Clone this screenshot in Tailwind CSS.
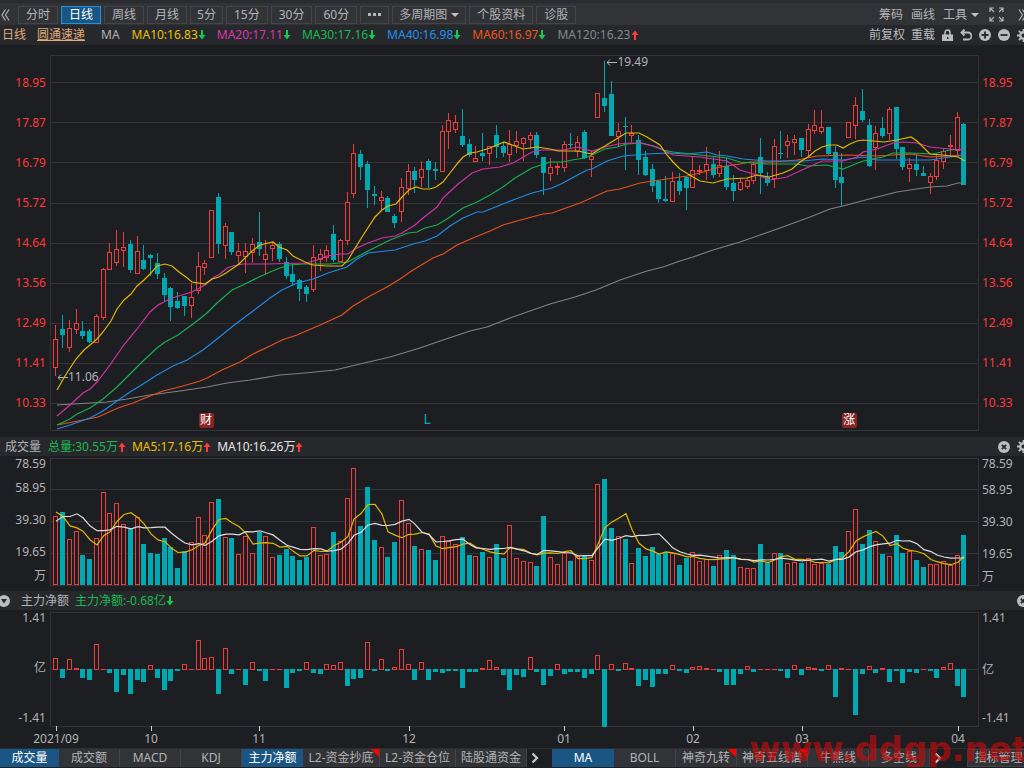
<!DOCTYPE html>
<html lang="zh-CN">
<head>
<meta charset="UTF-8" />
<meta name="viewport" content="width=device-width, initial-scale=1" />
<title>圆通速递 日线</title>
<script src="https://cdn.jsdelivr.net/npm/@tailwindcss/browser@4"></script>
</head>
<body class="bg-[#1d1e22] text-[#b2b3b6] font-['Noto_Sans','Noto_Sans_CJK_SC',sans-serif] text-xs overflow-x-hidden">
  <!-- shared icons -->
  <svg class="hidden">
    <symbol id="down" viewBox="0 0 8 10"><path d="M3 0h2v5h2.500L4 9.500.500 5H3z" fill="#18c850" /></symbol>
    <symbol id="up" viewBox="0 0 8 10"><path d="M3 10h2V5h2.500L4 .5.500 5H3z" fill="#ff3b3b" /></symbol>
    <symbol id="gear" viewBox="0 0 14 14">
      <circle cx="7" cy="7" r="3.500" fill="none" stroke="currentColor" stroke-width="2.500" />
      <path d="M7 0v3M7 11v3M0 7h3M11 7h3M2 2l2.200 2.200M9.800 9.800L12 12M2 12l2.200-2.200M9.800 4.200L12 2" stroke="currentColor" stroke-width="2" />
    </symbol>
    <symbol id="close" viewBox="0 0 12 12">
      <circle cx="6" cy="6" r="6" fill="currentColor" />
      <path d="M3.800 3.800l4.400 4.400M8.200 3.800L3.800 8.200" stroke="#27282c" stroke-width="1.800" />
    </symbol>
  </svg>

  <main class="relative overflow-hidden">
    <!-- period toolbar -->
    <nav class="flex items-center h-[25px] pt-px bg-[#323337] border-t-[3px] border-[#2a2b2f] whitespace-nowrap">
      <button class="w-[18px] pl-px shrink-0" aria-label="向左">
        <svg class="w-[9px] h-3" viewBox="0 0 9 12" fill="none" stroke="currentColor" stroke-width="1.200"><path d="M4.500 .5L1 6l3.500 5.500M8 .5L4.500 6 8 11.500" /></svg>
      </button>
      <div class="flex gap-[3px]">
        <button class="h-[18px] px-[7px] border border-[#434448] leading-4">分时</button>
        <button class="h-[18px] px-[7px] border border-[#2090e0] bg-[#195683] text-white leading-4">日线</button>
        <button class="h-[18px] px-[7px] border border-[#434448] leading-4">周线</button>
        <button class="h-[18px] px-[7px] border border-[#434448] leading-4">月线</button>
        <button class="h-[18px] px-[6px] border border-[#434448] leading-4">5分</button>
        <button class="h-[18px] px-[7px] border border-[#434448] leading-4">15分</button>
        <button class="h-[18px] px-[7px] border border-[#434448] leading-4">30分</button>
        <button class="h-[18px] px-[7px] border border-[#434448] leading-4">60分</button>
        <button class="h-[18px] px-[7px] border border-[#434448] flex items-center gap-[2px]" aria-label="更多">
          <span class="w-[3px] h-[3px] bg-[#b5b6b9]"></span><span class="w-[3px] h-[3px] bg-[#b5b6b9]"></span><span class="w-[3px] h-[3px] bg-[#b5b6b9]"></span>
        </button>
        <button class="h-[18px] px-[6px] border border-[#434448] leading-4 flex items-center gap-1">多周期图
          <svg class="w-2 h-1" viewBox="0 0 8 4"><path d="M0 0h8L4 4z" fill="#c0c1c3" /></svg>
        </button>
        <button class="h-[18px] px-[7px] border border-[#434448] leading-4">个股资料</button>
        <button class="h-[18px] px-[7px] border border-[#434448] leading-4">诊股</button>
      </div>
      <div class="ml-auto -mr-[3px] flex items-center gap-2 shrink-0">
        <button>筹码</button>
        <button>画线</button>
        <button class="flex items-center gap-1">工具 <svg class="w-2 h-1" viewBox="0 0 8 4"><path d="M0 0h8L4 4z" fill="#c0c1c3" /></svg></button>
        <button class="ml-[2px] mr-1" aria-label="全屏">
          <svg class="w-[15px] h-[15px] block" viewBox="0 0 15 15" fill="none" stroke="currentColor" stroke-width="1.200"><path d="M1 5V1h4M1 1l4 4M10 1h4v4M14 1l-4 4M1 10v4h4M1 14l4-4M14 10v4h-4M14 14l-4-4" /></svg>
        </button>
        <button class="ml-[2px]" aria-label="向右">
          <svg class="w-[9px] h-3 block" viewBox="0 0 9 12" fill="none" stroke="currentColor" stroke-width="1.200"><path d="M1 .5L4.500 6 1 11.500M4.500 .5L8 6l-3.500 5.500" /></svg>
        </button>
      </div>
    </nav>

    <!-- moving averages -->
    <div class="flex items-center h-5 pl-[2px] bg-[#27282c] whitespace-nowrap">
      <span class="text-[#e0ac7a]">日线</span>
      <a href="#" class="ml-[11px] text-[#e0ac7a] underline underline-offset-1">圆通速递</a>
      <span class="ml-4 mr-3">MA</span>
      <div class="flex gap-[11px]">
        <span class="flex items-center text-[#e8c000]">MA10:16.83<svg class="w-2 h-[10px]"><use href="#down" /></svg></span>
        <span class="flex items-center text-[#dc36ac]">MA20:17.11<svg class="w-2 h-[10px]"><use href="#down" /></svg></span>
        <span class="flex items-center text-[#18ba50]">MA30:17.16<svg class="w-2 h-[10px]"><use href="#down" /></svg></span>
        <span class="flex items-center text-[#2090f0]">MA40:16.98<svg class="w-2 h-[10px]"><use href="#down" /></svg></span>
        <span class="flex items-center text-[#f4541c]">MA60:16.97<svg class="w-2 h-[10px]"><use href="#down" /></svg></span>
        <span class="flex items-center text-[#86878a]">MA120:16.23<svg class="w-2 h-[10px]"><use href="#up" /></svg></span>
      </div>
      <div class="ml-auto -mr-[6px] flex items-center gap-[7px] shrink-0 text-[#bbbcbf]">
        <button>前复权</button>
        <button class="-ml-px">重载</button>
        <button aria-label="锁定">
          <svg class="w-[11px] h-3 block" viewBox="0 0 11 12"><path d="M3 6V3.500a2.500 2.500 0 0 1 5 0V6" fill="none" stroke="currentColor" stroke-width="1.500" /><path d="M0 5.500h11V12H0z" fill="currentColor" /><path d="M5 8h1.500v2H5z" fill="#27282c" /></svg>
        </button>
        <button aria-label="撤销">
          <svg class="w-3 h-3 block" viewBox="0 0 12 12" fill="none" stroke="currentColor" stroke-width="1.800"><path d="M1.500 3.500H8a3.500 3.500 0 0 1 0 7H3M4.500 .5l-3 3 3 3" /></svg>
        </button>
        <button aria-label="放大">
          <svg class="w-3 h-3 block" viewBox="0 0 12 12"><circle cx="6" cy="6" r="6" fill="currentColor" /><path d="M6 2.500v7M2.500 6h7" stroke="#27282c" stroke-width="1.800" /></svg>
        </button>
        <button aria-label="缩小">
          <svg class="w-3 h-3 block" viewBox="0 0 12 12"><circle cx="6" cy="6" r="6" fill="currentColor" /><path d="M2.500 6h7" stroke="#27282c" stroke-width="1.800" /></svg>
        </button>
        <button aria-label="设置"><svg class="w-[13px] h-[13px] block"><use href="#gear" /></svg></button>
      </div>
    </div>

    <!-- K line -->
    <section class="flex pt-[10px] pb-[6px]">
      <div class="w-[50px] shrink-0 pt-2 pr-1 text-right text-[#ff3838] leading-10">
        <div>18.95</div><div>17.87</div><div>16.79</div><div>15.72</div><div>14.64</div><div>13.56</div><div>12.49</div><div>11.41</div><div>10.33</div>
      </div>
      <div class="relative flex-1 min-w-0">
        <svg id="kline" class="block w-full h-[376px]" viewBox="50 55 929 376" preserveAspectRatio="none"></svg>
        <span class="absolute left-[60%] top-0 leading-[14px] flex items-center">
          <svg class="w-[10px] h-[7px]" viewBox="0 0 10 7" fill="none" stroke="currentColor"><path d="M0 3.500h10M3 .5l-3 3 3 3" /></svg>19.49
        </span>
        <span class="absolute left-2 top-[315px] leading-[14px] flex items-center">
          <svg class="w-[10px] h-[7px]" viewBox="0 0 10 7" fill="none" stroke="currentColor"><path d="M0 3.500h10M3 .5l-3 3 3 3" /></svg>11.06
        </span>
        <span class="absolute left-[16%] top-[358px] w-[15px] h-[15px] leading-[14px] text-center rounded-xs bg-[#8a2527] text-white">财</span>
        <span class="absolute left-[40%] top-[356px] ml-[2px] leading-[15px] text-sm text-[#00a9b2]">L</span>
        <span class="absolute left-[85%] top-[358px] ml-[2px] w-[15px] h-[15px] leading-[14px] text-center rounded-xs bg-[#8a2527] text-white">涨</span>
      </div>
      <div class="w-[45px] shrink-0 pt-2 pl-[3px] text-[#ff3838] leading-10">
        <div>18.95</div><div>17.87</div><div>16.79</div><div>15.72</div><div>14.64</div><div>13.56</div><div>12.49</div><div>11.41</div><div>10.33</div>
      </div>
    </section>

    <!-- volume -->
    <header class="flex items-center h-[19px] pl-[5px] bg-[#27282c] whitespace-nowrap">
      <span>成交量</span>
      <span class="ml-[7px] flex items-center text-[#18ba50]">总量:30.55万<svg class="w-2 h-[10px]"><use href="#up" /></svg></span>
      <span class="ml-[6px] flex items-center text-[#e8c000]">MA5:17.16万<svg class="w-2 h-[10px]"><use href="#up" /></svg></span>
      <span class="ml-[6px] flex items-center text-[#e4e4e4]">MA10:16.26万<svg class="w-2 h-[10px]"><use href="#up" /></svg></span>
      <div class="ml-auto -mr-[6px] flex items-center gap-[7px] text-[#bbbcbf]">
        <button aria-label="关闭成交量"><svg class="w-3 h-3 block"><use href="#close" /></svg></button>
        <button aria-label="设置成交量"><svg class="w-[13px] h-[13px] block"><use href="#gear" /></svg></button>
      </div>
    </header>
    <section class="flex pt-[2px] pb-[5px]">
      <div class="w-[50px] shrink-0 pr-1 text-right">
        <div class="h-3 leading-3">78.59</div>
        <div class="h-9 leading-9">58.95</div>
        <div class="h-7 leading-7">39.30</div>
        <div class="h-9 leading-9">19.65</div>
        <div class="h-3 leading-3">万</div>
      </div>
      <svg id="volume" class="block flex-1 min-w-0 h-32" viewBox="50 458 929 128" preserveAspectRatio="none"></svg>
      <div class="w-[45px] shrink-0 pl-[3px]">
        <div class="h-3 leading-3">78.59</div>
        <div class="h-10 leading-10">58.95</div>
        <div class="h-6 leading-6">39.30</div>
        <div class="h-10 leading-10">19.65</div>
        <div class="h-3 leading-[6px]">万</div>
      </div>
    </section>

    <!-- net inflow -->
    <header class="flex items-center h-[19px] bg-[#27282c] whitespace-nowrap">
      <button class="-ml-[2px] mr-[11px] text-[#bbbcbf]" aria-label="展开">
        <svg class="w-3 h-3 block" viewBox="0 0 12 12"><circle cx="6" cy="6" r="6" fill="currentColor" /><path d="M3 4h6L6 8.500z" fill="#27282c" /></svg>
      </button>
      <span>主力净额</span>
      <span class="ml-[6px] flex items-center text-[#18ba50]">主力净额:-0.68亿<svg class="w-2 h-[10px]"><use href="#down" /></svg></span>
      <button class="ml-auto -mr-[5px] text-[#bbbcbf]" aria-label="关闭主力净额"><svg class="w-3 h-3 block"><use href="#close" /></svg></button>
    </header>
    <section class="flex pt-[2px]">
      <div class="w-[50px] shrink-0 pr-1 pb-[3px] flex flex-col justify-between text-right leading-3">
        <div>1.41</div><div>亿</div><div>-1.41</div>
      </div>
      <svg id="flow" class="block flex-1 min-w-0 h-[115px]" viewBox="50 612 929 115" preserveAspectRatio="none"></svg>
      <div class="w-[45px] shrink-0 pl-[3px] pb-[3px] flex flex-col justify-between leading-3">
        <div>1.41</div><div class="pt-1">亿</div><div>-1.41</div>
      </div>
    </section>
    <div class="pl-[50px] pr-[45px]"><div id="months" class="relative h-[21px]"></div></div>

    <!-- indicator tabs -->
    <nav class="flex h-[19px] border-t border-[#2c2d31] leading-[18px] whitespace-nowrap">
      <button class="w-[59px] shrink-0 bg-[#195683] text-white">成交量</button>
      <button class="w-[61px] shrink-0 bg-[#323337] border-r border-[#434448]">成交额</button>
      <button class="w-[61px] shrink-0 bg-[#323337] border-r border-[#434448]">MACD</button>
      <button class="w-[61px] shrink-0 bg-[#323337] border-r border-[#434448]">KDJ</button>
      <button class="w-[61px] shrink-0 bg-[#195683] text-white">主力净额</button>
      <button class="relative w-[77px] shrink-0 bg-[#323337] border-r border-[#434448]">L2-资金抄底
        <svg class="absolute right-0 top-0 w-2 h-2" viewBox="0 0 8 8"><path d="M0 0h8v8z" fill="#f00" /></svg>
      </button>
      <button class="w-[76px] shrink-0 bg-[#323337] border-r border-[#434448]">L2-资金仓位</button>
      <button class="w-[71px] shrink-0 bg-[#323337] border-r border-[#434448]">陆股通资金</button>
      <button class="w-[25px] shrink-0 pl-1" aria-label="更多副图">
        <svg class="w-2 h-[10px] block" viewBox="0 0 8 10" fill="none" stroke="#c8c9cb" stroke-width="2.200"><path d="M1.500 .5L6 5 1.500 9.500" /></svg>
      </button>
      <button class="w-[62px] shrink-0 bg-[#195683] text-white">MA</button>
      <button class="w-[62px] shrink-0 bg-[#323337] border-r border-[#434448]">BOLL</button>
      <button class="relative w-[61px] shrink-0 bg-[#323337] border-r border-[#434448]">神奇九转
        <svg class="absolute right-0 top-0 w-2 h-2" viewBox="0 0 8 8"><path d="M0 0h8v8z" fill="#f00" /></svg>
      </button>
      <button class="relative w-[71px] shrink-0 bg-[#323337] border-r border-[#434448]">神奇五线谱
        <svg class="absolute right-0 top-0 w-2 h-2" viewBox="0 0 8 8"><path d="M0 0h8v8z" fill="#f00" /></svg>
      </button>
      <button class="w-[61px] shrink-0 bg-[#323337] border-r border-[#434448]">牛熊线</button>
      <button class="w-[61px] shrink-0 bg-[#323337] border-r border-[#434448]">多空线</button>
      <button class="w-[18px] shrink-0 pl-1" aria-label="更多主图">
        <svg class="w-2 h-[10px] block" viewBox="0 0 8 10" fill="none" stroke="#c8c9cb" stroke-width="2.200"><path d="M1.500 .5L6 5 1.500 9.500" /></svg>
      </button>
      <button class="ml-auto -mr-[6px] w-[63px] shrink-0 bg-[#323337] border border-[#434448] leading-4">指标管理</button>
    </nav>

    <div class="absolute -right-1 bottom-0 text-[34px] leading-9 font-bold font-['DejaVu_Sans',sans-serif] text-[#c80a0a]/65 pointer-events-none">www.ddgp.net</div>
  </main>

  <script>
    const RED = "#ee3c3c", TEAL = "#00a9b2", BG = "#1d1e22", GRID = "#323337";

    // [up, high, body top, body bottom, low]
    const candles = [
      [1,325,339,367,376],[0,315,329,335,348],[1,320,328,347,352],[1,309,323,329,334],[0,321,331,336,339],
      [0,329,331,342,343],[1,314,316,342,342],[1,268,269,317,320],[1,243,252,269,270],[1,230,249,262,266],
      [1,232,247,250,267],[0,240,244,270,273],[1,236,251,273,273],[0,245,260,269,270],[0,254,255,258,276],
      [0,253,263,274,279],[0,273,278,295,301],[0,287,288,307,321],[0,292,301,308,309],[0,296,296,306,316],
      [1,283,297,305,318],[1,252,266,290,294],[1,260,263,267,275],[1,210,210,257,257],[0,193,197,244,254],
      [1,223,226,245,259],[0,232,232,252,255],[1,243,251,255,264],[1,243,251,256,273],[1,238,244,252,263],
      [0,212,242,249,256],[1,240,254,259,275],[1,242,245,248,261],[0,242,244,259,262],[0,257,262,276,279],
      [0,264,274,282,286],[0,279,280,289,301],[0,285,287,294,302],[1,245,257,289,292],[1,249,254,259,271],
      [1,245,250,257,262],[0,225,234,260,262],[1,239,240,261,261],[1,192,202,240,245],[1,144,153,193,198],
      [0,150,154,167,180],[0,161,164,190,208],[0,186,194,196,205],[1,191,197,200,211],[0,196,198,212,212],
      [0,214,216,223,228],[1,178,187,211,222],[1,164,171,188,195],[0,167,171,180,193],[1,161,169,177,187],
      [0,159,161,170,188],[0,162,169,171,180],[1,125,131,171,171],[1,113,120,131,149],[1,115,122,129,133],
      [0,109,136,145,147],[0,139,144,155,157],[1,146,158,161,162],[0,133,153,156,161],[1,146,146,153,165],
      [0,125,135,147,158],[0,142,146,153,157],[1,130,144,154,162],[1,131,141,145,153],[1,137,138,143,161],
      [1,132,135,139,149],[0,132,135,155,158],[0,157,157,173,195],[1,158,167,173,181],[1,163,166,167,175],
      [1,141,144,167,172],[0,133,144,145,149],[1,136,142,151,157],[0,130,132,158,159],[1,151,156,159,177],
      [1,93,93,117,117],[0,61,98,106,112],[0,81,94,136,136],[1,123,131,136,146],[0,117,126,127,170],
      [1,125,133,135,142],[0,135,140,160,175],[0,151,157,175,176],[0,164,169,186,192],[0,180,181,199,203],
      [0,176,199,201,202],[1,172,181,201,201],[0,173,181,191,195],[0,176,177,188,210],[1,156,170,187,187],
      [1,165,170,171,175],[1,147,164,170,180],[0,157,164,175,178],[1,151,165,173,177],[0,158,166,187,190],
      [0,175,183,191,201],[1,179,182,189,191],[1,177,180,186,189],[1,162,164,180,184],[0,138,157,173,194],
      [0,172,177,183,186],[1,139,146,178,188],[0,131,153,154,159],[1,135,141,145,158],[1,135,139,142,155],
      [0,138,138,150,157],[1,124,129,150,157],[1,110,125,130,134],[1,110,127,131,134],[0,127,127,154,155],
      [0,146,152,180,188],[0,153,177,183,207],[1,122,122,137,137],[1,97,105,125,139],[0,89,111,120,122],
      [0,119,125,166,167],[1,126,133,147,170],[0,117,128,136,138],[1,107,109,133,140],[0,107,107,149,159],
      [0,147,147,167,170],[1,158,164,168,182],[0,154,164,170,176],[0,166,173,176,176],[1,173,176,182,194],
      [1,155,160,176,180],[1,149,151,161,169],[1,135,145,146,157],[1,112,117,150,155],[0,123,124,185,185]
    ];

    const lines = {
      "#808184": "57,405 90,403 107,402 127,399 150,395 180,391 207,387 227,383 250,380 280,375 305,373 335,370 360,364 390,357 420,348 443,340 470,331 487,327 510,318 550,304 575,297 596,290 620,280 647,271 663,267 680,261 693,257 713,250 740,242 763,234 780,228 810,217 830,209 843,206 873,198 897,192 930,187 947,186 958,183 965,183",
      "#e8501c": "57,425 73,422 98,417 118,408 133,403 150,396 163,391 183,386 200,381 207,378 222,370 240,362 253,354 270,346 282,340 297,335 320,325 342,315 353,306 370,296 387,287 400,279 413,270 433,258 443,254 457,245 473,238 490,231 503,225 517,221 543,214 552,213 563,209 580,203 607,191 620,189 640,183 660,180 687,176 700,173 720,167 740,164 750,162 773,162 797,160 817,156 847,155 877,156 910,154 930,157 965,155",
      "#1e8ae6": "57,429 70,425 90,418 103,411 117,401 130,392 143,384 157,375 173,366 187,360 203,350 217,339 233,326 253,311 270,298 282,290 297,283 313,279 328,273 347,267 357,259 368,253 377,252 395,250 413,244 425,241 437,236 450,226 463,218 477,212 483,212 493,208 513,200 532,193 552,188 563,183 572,178 587,170 592,169 607,161 623,156 647,154 667,153 687,154 707,152 717,155 727,156 743,159 767,161 803,161 823,159 843,160 863,157 877,160 897,160 917,160 930,160 950,157 965,155",
      "#16b04c": "57,425 70,419 77,414 90,408 103,399 117,387 130,374 143,361 157,348 165,342 178,335 193,324 207,313 217,303 232,290 243,285 257,278 270,272 280,268 290,265 303,264 330,264 348,262 355,258 368,251 382,244 390,240 408,233 417,232 425,228 437,225 447,219 463,208 477,202 490,195 503,187 515,178 532,168 550,162 563,162 572,160 585,158 592,155 605,149 617,147 627,144 642,143 653,146 663,150 673,152 700,155 727,158 740,162 767,164 797,164 807,166 827,165 843,169 853,165 863,161 883,157 893,153 910,153 933,154 950,150 965,149",
      "#d232a4": "57,416 70,405 83,393 90,389 97,382 110,365 123,346 137,329 150,312 158,305 172,298 192,292 205,285 213,278 220,274 227,268 233,266 243,264 267,264 306,263 317,260 327,256 340,254 348,254 355,249 368,243 382,238 395,236 402,233 415,225 423,218 437,207 443,198 457,185 472,173 483,169 500,167 513,163 532,152 542,150 563,150 578,147 592,151 605,147 618,144 630,143 640,143 657,147 673,155 700,157 727,161 740,170 760,176 770,180 787,177 802,170 822,161 843,161 857,157 863,152 877,149 893,143 903,142 917,143 930,147 950,149 965,150",
      "#e0b800": "57,390 65,376 76,359 84,350 90,345 97,339 103,332 111,321 117,309 124,300 131,294 137,286 144,280 151,273 157,266 165,264 172,266 179,272 186,277 192,282 205,284 212,279 219,277 226,273 239,264 252,251 260,245 273,242 279,247 287,250 293,256 307,263 313,265 327,266 342,266 348,260 354,250 362,237 375,217 382,210 388,206 396,204 402,197 409,190 416,187 423,189 430,189 436,187 443,182 450,173 457,164 463,157 470,153 477,152 490,148 497,145 504,142 523,149 537,147 550,149 558,151 578,151 587,153 592,154 598,150 605,146 618,138 626,133 639,133 647,137 660,145 667,155 673,162 680,169 693,177 700,181 713,183 727,179 747,178 757,175 769,177 783,173 792,169 800,162 808,157 815,151 822,147 829,145 837,145 843,148 850,144 857,141 863,140 884,142 897,140 911,137 917,141 930,154 943,155 958,157 965,161"
    };

    // days before the visible range, needed by the volume averages
    const earlier = [26,46,27,70,106,96,93,64,46];
    const volumes = [
      69,73,46,54,30,26,47,93,72,82,61,56,68,41,32,31,47,38,17,34,43,68,50,83,86,48,47,31,49,32,
      53,49,28,30,36,29,25,28,58,30,31,53,44,87,117,59,98,45,38,28,43,85,62,39,36,35,25,49,44,41,
      48,30,29,33,28,41,27,60,27,24,23,19,69,28,21,32,24,29,29,25,101,106,57,49,46,22,37,29,38,31,
      33,32,20,27,33,24,26,19,30,35,30,18,17,17,41,22,32,32,22,23,22,27,21,22,21,39,33,54,76,41,
      55,44,31,29,50,32,34,25,18,21,21,24,20,30,50
    ];

    const flows = [
      11,-8,10,1,-8,-10,25,0,-3,-22,-5,-24,-10,-12,4,-8,-20,-11,-1,5,0,29,11,12,-24,21,-4,0,-15,7,
      -1,-11,0,0,-18,-3,-1,7,-3,-4,5,4,7,-16,-9,-8,27,-1,10,-1,2,20,5,-10,7,-10,-2,-3,-1,-1,
      -18,-2,-2,1,9,2,-5,-20,-5,-7,12,-2,-15,-6,5,-4,-2,-2,-8,-4,14,-57,5,-1,6,1,-16,-10,-17,-4,
      -4,4,-1,-3,2,3,1,0,-2,-15,-15,-4,3,-2,0,0,0,-1,-8,4,-5,2,1,-1,4,-27,1,0,-45,-4,
      3,-3,1,-12,-1,-13,-2,-3,0,-1,-8,2,6,-16,-27
    ];

    const months = [["2021/09", 56], ["10", 151], ["11", 259], ["12", 409], ["01", 564], ["02", 693], ["03", 802], ["04", 958]];

    const xOf = i => Math.floor(55.7 + i * 6.778);
    const rect = (x, y, w, h, c) => `<rect x="${x}" y="${y}" width="${w}" height="${h}" fill="${c}"/>`;
    const line = (pts, c) => `<polyline points="${pts}" fill="none" stroke="${c}" stroke-width="1.2"/>`;

    function bar(i, top, h, up) {
      const x = xOf(i) - 2;
      let s = rect(x, top, 5, Math.max(h, 1), up ? RED : TEAL);
      if (up && h > 2) s += rect(x + 1, top + 1, 3, h - 2, BG);
      return s;
    }

    function frame(top, bottom, rows) {
      let s = rect(50, top, 1, bottom - top, GRID) + rect(978, top, 1, bottom - top, GRID);
      for (const y of [top, ...rows, bottom - 1]) s += rect(50, y, 929, 1, GRID);
      return s;
    }

    let k = frame(55, 431, [82, 122, 162, 203, 243, 283, 323, 363, 403]);
    candles.forEach(([up, high, top, bottom, low], i) => {
      k += rect(xOf(i), high, 1, Math.max(low - high, 1), up ? RED : TEAL) + bar(i, top, bottom - top + up, up);
    });
    for (const c in lines) k += line(lines[c], c);
    document.getElementById("kline").innerHTML = k;

    function average(n) {
      const all = [...earlier, ...volumes];
      return volumes.map((_, i) => {
        const end = i + earlier.length + 1;
        const sum = all.slice(end - n, end).reduce((a, b) => a + b, 0);
        return (xOf(i) + 1) + "," + (585.5 - sum / n).toFixed(1);
      }).join(" ");
    }

    let v = frame(458, 586, [489, 521, 553]);
    volumes.forEach((h, i) => v += bar(i, 585 - h, h, candles[i][0]));
    v += line(average(5), "#e0b800") + line(average(10), "#dcdcdc");
    document.getElementById("volume").innerHTML = v;

    let f = frame(612, 727, [669]);
    flows.forEach((h, i) => f += h < 0 ? bar(i, 669, 1 - h, 0) : bar(i, 669 - h, h + 1, 1));
    document.getElementById("flow").innerHTML = f;

    document.getElementById("months").innerHTML = months.map(([name, x]) => {
      const left = (x - 50) / 929 * 100;
      return `<i class="absolute -top-px w-px h-[5px] bg-[#d0d0d0]" style="left:${left}%"></i>
        <span class="absolute top-1 leading-4 -translate-x-1/2" style="left:${left}%">${name}</span>`;
    }).join("");
  </script>
</body>
</html>
